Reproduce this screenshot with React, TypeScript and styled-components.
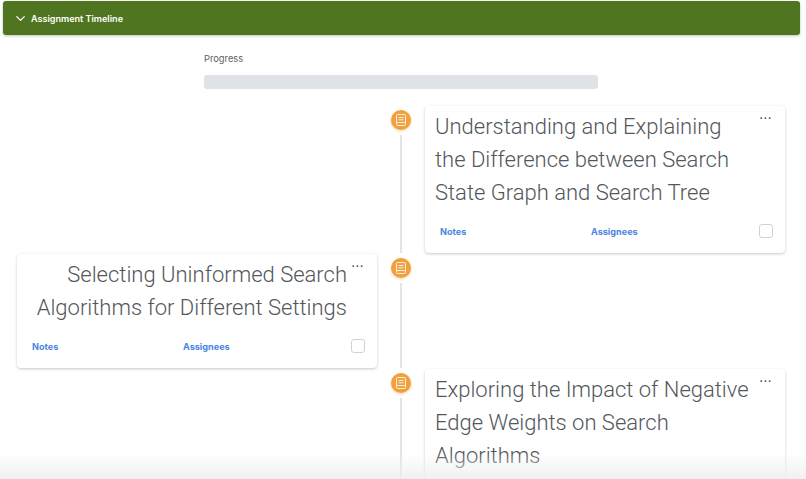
import styled, { createGlobalStyle } from "styled-components";
import { ChevronDown } from "lucide-react";

const GlobalStyle = createGlobalStyle`
  html, body {
    margin: 0;
    height: 100%;
    overflow: hidden;
    background: #fff;
    font-family: Inter, "Liberation Sans", sans-serif;
  }
`;

interface Assignment {
  title: string;
  side: "left" | "right";
}

const assignments: Assignment[] = [
  {
    title: "Understanding and Explaining the Difference between Search State Graph and Search Tree",
    side: "right",
  },
  {
    title: "Selecting Uninformed Search Algorithms for Different Settings",
    side: "left",
  },
  {
    title: "Exploring the Impact of Negative Edge Weights on Search Algorithms",
    side: "right",
  },
];

const NoteIcon = () => (
  <svg width="14" height="14" viewBox="0 0 14 14" fill="none" stroke="#fff" strokeWidth="1" opacity="0.85">
    <rect x="2.5" y="1.5" width="9" height="11" rx="1" />
    <path d="M4.5 4.5h5M4.5 6.8h5M2.5 9.6h9" />
  </svg>
);

export default function App() {
  return (
    <Page>
      <GlobalStyle />
      <Header>
        <ChevronDown size={15} strokeWidth={2} />
        <HeaderTitle>Assignment Timeline</HeaderTitle>
      </Header>
      <ProgressSection>
        <ProgressLabel>Progress</ProgressLabel>
        <ProgressTrack />
      </ProgressSection>
      <Timeline>
        {assignments.map((item) => (
          <Row key={item.title}>
            <Slot>{item.side === "left" && <AssignmentCard item={item} />}</Slot>
            <Rail>
              <Node>
                <NoteIcon />
              </Node>
              <Line />
            </Rail>
            <Slot>{item.side === "right" && <AssignmentCard item={item} />}</Slot>
          </Row>
        ))}
      </Timeline>
      <BottomFade />
    </Page>
  );
}

const AssignmentCard = ({ item }: { item: Assignment }) => (
  <Card>
    <Dots>...</Dots>
    <Title $side={item.side}>{item.title}</Title>
    <Footer>
      <LinkText>Notes</LinkText>
      <LinkText>Assignees</LinkText>
      <Check />
    </Footer>
  </Card>
);

// Styling Components
const Page = styled.div`
  position: relative;
  width: 806px;
  height: 479px;
  overflow: hidden;
  padding-top: 1px;
  box-sizing: border-box;
`;

const Header = styled.div`
  display: flex;
  align-items: center;
  gap: 3px;
  height: 34px;
  margin: 0 6px 0 3px;
  padding-left: 10px;
  box-sizing: border-box;
  background: #4f7520;
  border-radius: 3px;
  color: #fff;
  box-shadow: 0 1px 3px rgba(0, 0, 0, 0.25);
`;

const HeaderTitle = styled.span`
  margin-top: 1px;
  font-size: 9.05px;
  font-weight: 600;
  line-height: 1;
`;

const ProgressSection = styled.div`
  width: 394px;
  margin: 17px 0 0 204px;
`;

const ProgressLabel = styled.div`
  padding-top: 1px;
  font-size: 9.3px;
  line-height: 12px;
  color: #5b5f65;
`;

const ProgressTrack = styled.div`
  height: 14px;
  margin-top: 10px;
  background: #dfe2e7;
  border-radius: 3px;
`;

const Timeline = styled.div`
  margin-top: 17px;
  padding: 0 21px 0 17px;
`;

const Row = styled.div`
  display: grid;
  grid-template-columns: 360px 48px 360px;
  margin-bottom: 1px;
`;

const Slot = styled.div`
  min-width: 0;
`;

const Rail = styled.div`
  display: flex;
  flex-direction: column;
  align-items: center;
  padding-top: 4px;
`;

const Node = styled.div`
  display: flex;
  align-items: center;
  justify-content: center;
  flex: none;
  width: 20px;
  height: 20px;
  border-radius: 50%;
  background: #f0a03c;
  box-shadow: 0 1px 3px rgba(240, 160, 60, 0.45);
`;

const Line = styled.div`
  flex: 1;
  width: 2px;
  margin-top: 5px;
  background: #e2e4e8;
`;

const Card = styled.div`
  position: relative;
  padding: 4px 30px 2px 10px;
  background: #fff;
  border-radius: 4px;
  box-shadow: 0 1px 3px rgba(0, 0, 0, 0.22);
`;

const Dots = styled.span`
  position: absolute;
  top: 2px;
  right: 13px;
  font-size: 13px;
  line-height: 13px;
  letter-spacing: 0.5px;
  color: #4a4d52;
`;

const Title = styled.div<{ $side: "left" | "right" }>`
  font-family: Roboto, sans-serif;
  font-weight: 300;
  font-size: 22px;
  line-height: 33px;
  color: #53575c;
  text-align: ${({ $side }) => ($side === "left" ? "right" : "left")};
`;

const Footer = styled.div`
  display: grid;
  grid-template-columns: 151px 1fr 14px;
  align-items: center;
  height: 40px;
  margin: 2px -18px 0 5px;
`;

const LinkText = styled.span`
  font-size: 9.1px;
  font-weight: 700;
  color: #4a86e0;
`;

const Check = styled.span`
  width: 14px;
  height: 14px;
  box-sizing: border-box;
  border: 1px solid #cfd2d6;
  border-radius: 3px;
`;

const BottomFade = styled.div`
  position: absolute;
  left: 0;
  right: 0;
  bottom: 0;
  height: 26px;
  background: linear-gradient(to bottom, rgba(238, 238, 238, 0), rgba(238, 238, 238, 0.85));
  pointer-events: none;
`;
